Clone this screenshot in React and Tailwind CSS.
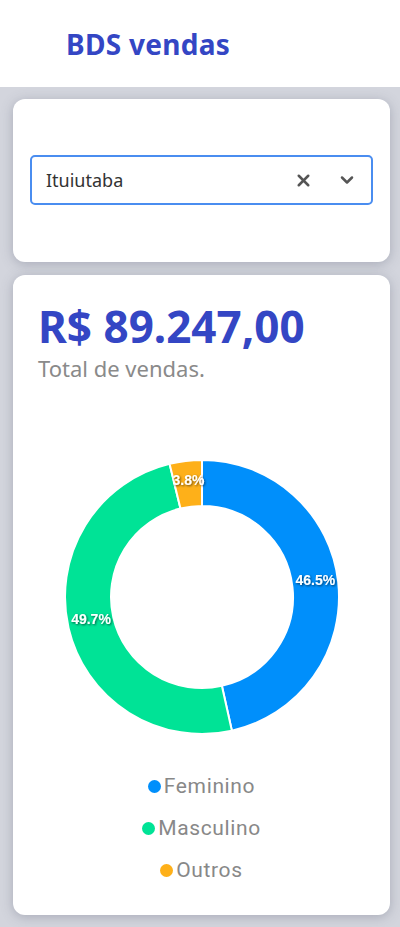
import { X, ChevronDown } from 'lucide-react';

const slices = [
  { label: 'Feminino', value: 46.5, color: '#008ffb' },
  { label: 'Masculino', value: 49.7, color: '#00e396' },
  { label: 'Outros', value: 3.8, color: '#feb019' },
];

const CX = 137;
const CY = 137;
const R = 137;
const RI = 91;

function pt(r, deg) {
  const a = ((deg - 90) * Math.PI) / 180;
  return [CX + r * Math.cos(a), CY + r * Math.sin(a)];
}

function arc(start, end) {
  const large = end - start > 180 ? 1 : 0;
  const [x1, y1] = pt(R, start);
  const [x2, y2] = pt(R, end);
  const [x3, y3] = pt(RI, end);
  const [x4, y4] = pt(RI, start);
  return `M${x1} ${y1} A${R} ${R} 0 ${large} 1 ${x2} ${y2} L${x3} ${y3} A${RI} ${RI} 0 ${large} 0 ${x4} ${y4} Z`;
}

function Donut() {
  let acc = 0;
  const parts = slices.map((s) => {
    const start = acc;
    const end = acc + (s.value / 100) * 360;
    acc = end;
    const [lx, ly] = pt((R + RI) / 2, (start + end) / 2);
    return { ...s, d: arc(start, end), lx, ly };
  });
  return (
    <svg width="274" height="274" viewBox="0 0 274 274" className="overflow-visible">
      <defs>
        <filter id="lblShadow" x="-20%" y="-40%" width="140%" height="180%">
          <feDropShadow dx="1" dy="1" stdDeviation="1" floodColor="#000" floodOpacity="0.6" />
        </filter>
      </defs>
      {parts.map((p) => (
        <path key={p.label} d={p.d} fill={p.color} stroke="#fff" strokeWidth="2" />
      ))}
      {parts.map((p) => (
        <text
          key={p.label + 't'}
          x={p.lx}
          y={p.ly - 4}
          textAnchor="middle"
          dominantBaseline="central"
          fill="#fff"
          fontSize="14"
          fontWeight="700"
          fontFamily="'Liberation Sans', Arial, sans-serif"
          filter="url(#lblShadow)"
        >
          {p.value}%
        </text>
      ))}
    </svg>
  );
}

export default function App() {
  return (
    <div className="min-h-[927px] bg-[#d3d5dd] font-['Noto_Sans',sans-serif]">
      <header className="h-[87px] bg-white flex items-center pl-[66px]">
        <h1 className="text-[28px] font-bold text-[#3446c4] tracking-[0.01em]">BDS vendas</h1>
      </header>

      <main className="pl-[13px] pr-[10px] pt-[12px] pb-[12px] flex flex-col gap-[13px]">
        <section className="bg-white rounded-xl shadow-[0_2px_12px_rgba(90,95,115,0.35)] px-[17px] pt-[56px] pb-[57px]">
          <div className="h-[50px] border-2 border-[#4a8df0] rounded-[5px] flex items-center pl-[14px] pr-[14px]">
            <span className="flex-1 text-[18px] text-[#333]">Ituiutaba</span>
            <X className="w-[19px] h-[19px] text-[#555] mr-[24px]" strokeWidth={3.2} />
            <ChevronDown className="w-[20px] h-[20px] text-[#555]" strokeWidth={3} />
          </div>
        </section>

        <section className="bg-white rounded-xl shadow-[0_2px_12px_rgba(90,95,115,0.35)] px-[25px] pt-[27px] pb-[32px]">
          <div className="text-[44px] leading-[48px] font-bold text-[#3446c4]">R$ 89.247,00</div>
          <div className="text-[22px] leading-[30px] text-[#8a8a8a] mt-[3px]">Total de vendas.</div>

          <div className="flex justify-center mt-[77px]">
            <Donut />
          </div>

          <ul className="mt-[40px] flex flex-col items-center gap-[17px] font-['Roboto',sans-serif]">
            {slices.map((s) => (
              <li key={s.label} className="flex items-center gap-[3px] text-[21px] leading-[25px] tracking-[0.03em] text-[#888]">
                <span className="w-[13px] h-[13px] rounded-full" style={{ backgroundColor: s.color }} />
                {s.label}
              </li>
            ))}
          </ul>
        </section>
      </main>
    </div>
  );
}
